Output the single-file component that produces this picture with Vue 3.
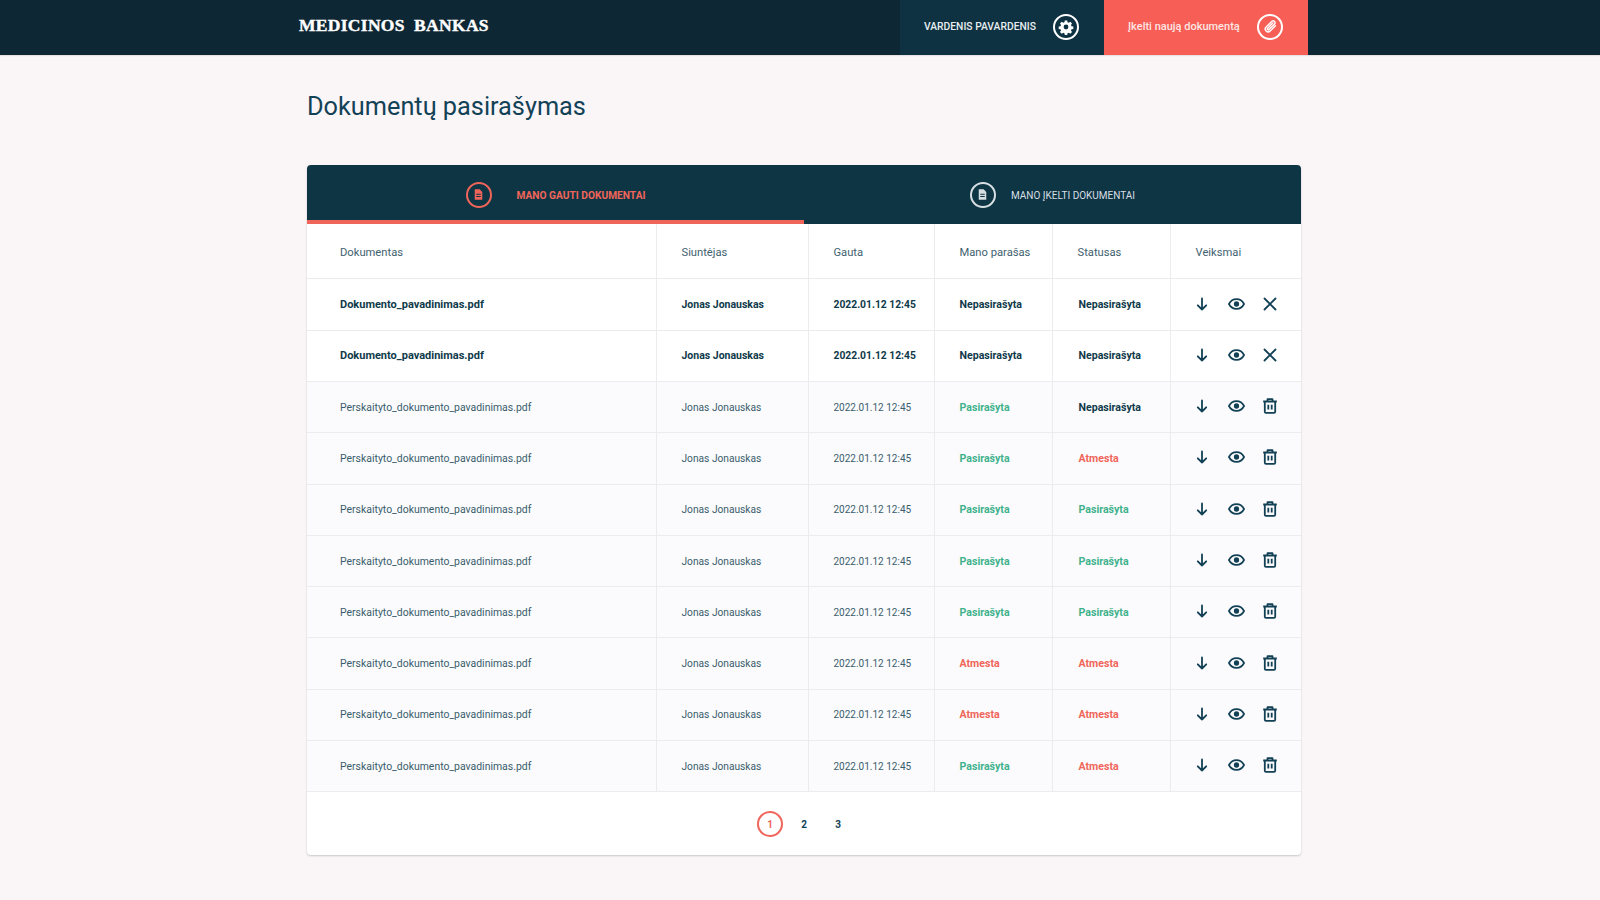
<template>
  <div class="page">
    <header class="topbar">
      <div class="topbarInner">
        <div class="logo">MEDICINOS&nbsp; BANKAS</div>
        <div class="userBox">
          <span class="userName">VARDENIS PAVARDENIS</span>
          <span class="circleIcon">
            <svg viewBox="0 0 24 24" width="16" height="16">
              <path fill="#fff" fill-rule="evenodd" d="M10 1h4l.6 3 2 .9 2.600-1.700 2.800 2.800-1.700 2.600.9 2 3 .6v4l-3 .6-.9 2 1.700 2.600-2.800 2.800-2.600-1.700-2 .9-.6 3h-4l-.6-3-2-.9-2.600 1.700-2.800-2.800 1.700-2.600-.9-2-3-.6v-4l3-.6.9-2-1.700-2.600 2.800-2.800 2.600 1.700 2-.9zM12 8a4 4 0 1 0 0 8 4 4 0 0 0 0-8z" transform="translate(1.200 1.200) scale(.9)" />
            </svg>
          </span>
        </div>
        <div class="uploadBox">
          <span class="uploadText">Įkelti naują dokumentą</span>
          <span class="circleIcon">
            <svg viewBox="0 0 24 24" width="17" height="17" fill="none" stroke="#fff" stroke-width="2" stroke-linecap="round">
              <path d="M19 11l-7.500 7.500a4 4 0 0 1-5.700-5.700l8.200-8.200a2.700 2.700 0 0 1 3.800 3.800l-8 8a1.300 1.300 0 0 1-1.900-1.900l7.400-7.400" />
            </svg>
          </span>
        </div>
      </div>
    </header>

    <main class="content">
      <h1 class="title">Dokumentų pasirašymas</h1>

      <section class="card">
        <div class="tabs">
          <div class="tab active">
            <span class="tabIcon">
              <svg viewBox="0 0 12 14" width="9" height="11">
                <path fill="currentColor" fill-rule="evenodd" d="M1 0h6.500L11 3.500V14H1zM3 6v1.200h6V6zm0 3v1.200h6V9z" />
              </svg>
            </span>
            <span class="tabLabel">MANO GAUTI DOKUMENTAI</span>
          </div>
          <div class="tab">
            <span class="tabIcon">
              <svg viewBox="0 0 12 14" width="9" height="11">
                <path fill="currentColor" fill-rule="evenodd" d="M1 0h6.500L11 3.500V14H1zM3 6v1.200h6V6zm0 3v1.200h6V9z" />
              </svg>
            </span>
            <span class="tabLabel">MANO ĮKELTI DOKUMENTAI</span>
          </div>
        </div>

        <div class="row head">
          <div class="cell first">Dokumentas</div>
          <div class="cell">Siuntėjas</div>
          <div class="cell">Gauta</div>
          <div class="cell">Mano parašas</div>
          <div class="cell">Statusas</div>
          <div class="cell">Veiksmai</div>
        </div>

        <div v-for="(d, i) in docs" :key="i" class="row item" :class="{ unread: d.unread }">
          <div class="cell first">{{ d.name }}</div>
          <div class="cell">Jonas Jonauskas</div>
          <div class="cell date">2022.01.12 12:45</div>
          <div class="cell status" :class="statusClass(d.sign)">{{ d.sign }}</div>
          <div class="cell status" :class="statusClass(d.status)">{{ d.status }}</div>
          <div class="cell actions">
            <svg viewBox="0 0 16 16" width="16" height="16" fill="none" stroke="currentColor" stroke-width="1.800" stroke-linecap="round" stroke-linejoin="round">
              <path d="M8 2.500v11M3.800 9.300 8 13.500l4.200-4.200" />
            </svg>
            <svg viewBox="0 0 18 14" width="17" height="14" fill="none" stroke="currentColor" stroke-width="1.800">
              <path d="M1 7c1.800-3.500 4.600-5.200 8-5.200s6.200 1.700 8 5.200c-1.800 3.500-4.600 5.200-8 5.200S2.800 10.500 1 7z" />
              <circle cx="9" cy="7" r="2.800" fill="currentColor" stroke="none" />
            </svg>
            <svg v-if="d.unread" viewBox="0 0 16 16" width="16" height="16" fill="none" stroke="currentColor" stroke-width="1.800" stroke-linecap="round">
              <path d="M2.500 2.500l11 11M13.500 2.500l-11 11" />
            </svg>
            <svg v-else viewBox="0 0 16 16" width="16" height="16" fill="none" stroke="currentColor" stroke-width="1.800" stroke-linejoin="round">
              <path d="M1.200 3.500h13.600M5.500 3.300V1.200h5v2.100M2.800 3.500v10.200c0 .7.500 1.200 1.200 1.200h8c.7 0 1.200-.5 1.200-1.200V3.500M6.300 6.800v4.800M9.700 6.800v4.800" />
            </svg>
          </div>
        </div>

        <div class="pager">
          <span class="pageNum current">1</span>
          <span class="pageNum">2</span>
          <span class="pageNum">3</span>
        </div>
      </section>
    </main>
  </div>
</template>

<script setup>
const unreadName = "Dokumento_pavadinimas.pdf"
const readName = "Perskaityto_dokumento_pavadinimas.pdf"

const docs = [
  { name: unreadName, sign: "Nepasirašyta", status: "Nepasirašyta", unread: true },
  { name: unreadName, sign: "Nepasirašyta", status: "Nepasirašyta", unread: true },
  { name: readName, sign: "Pasirašyta", status: "Nepasirašyta" },
  { name: readName, sign: "Pasirašyta", status: "Atmesta" },
  { name: readName, sign: "Pasirašyta", status: "Pasirašyta" },
  { name: readName, sign: "Pasirašyta", status: "Pasirašyta" },
  { name: readName, sign: "Pasirašyta", status: "Pasirašyta" },
  { name: readName, sign: "Atmesta", status: "Atmesta" },
  { name: readName, sign: "Atmesta", status: "Atmesta" },
  { name: readName, sign: "Pasirašyta", status: "Atmesta" },
]

const statusClass = (s) => {
  if (s === "Pasirašyta") return "ok"
  if (s === "Atmesta") return "bad"
  return "none"
}
</script>

<style>
html,
body {
  margin: 0;
  background: #faf6f8;
}
</style>

<style scoped>
.page {
  height: 900px;
  overflow: hidden;
  background: #faf6f8;
  font-family: "Roboto", "Noto Sans", sans-serif;
  color: #0f3a4a;
}

/* top bar */
.topbar {
  height: 55px;
  background: #0e2734;
  box-shadow: 0 1px 1px rgba(0, 0, 0, 0.08);
}
.topbarInner {
  width: 1010px;
  margin-left: 299px;
  height: 100%;
  display: flex;
  align-items: stretch;
}
.logo {
  width: 601px;
  padding-top: 14px;
  font-family: "Liberation Serif", serif;
  font-weight: 700;
  font-size: 17.500px;
  line-height: 22px;
  color: #fff;
  letter-spacing: 0.3px;
  -webkit-text-stroke: 0.4px #fff;
  white-space: nowrap;
}
.userBox {
  width: 204px;
  background: #0e3242;
  display: flex;
  align-items: center;
  padding: 0 0 2px 24px;
  box-sizing: border-box;
}
.userName {
  width: 129px;
  font-size: 10.300px;
  font-weight: 500;
  color: #e8edf0;
  white-space: nowrap;
}
.uploadBox {
  width: 204px;
  background: #f65e56;
  display: flex;
  align-items: center;
  padding: 0 0 2px 24px;
  box-sizing: border-box;
}
.uploadText {
  width: 129px;
  font-size: 11px;
  font-weight: 500;
  color: #fde6e3;
  white-space: nowrap;
}
.circleIcon {
  width: 26px;
  height: 26px;
  box-sizing: border-box;
  border: 2px solid #fff;
  border-radius: 50%;
  display: flex;
  align-items: center;
  justify-content: center;
}

/* content */
.content {
  width: 994px;
  margin-left: 307px;
}
.title {
  margin: 0;
  padding-top: 34px;
  height: 76px;
  box-sizing: border-box;
  font-size: 25.300px;
  line-height: 36px;
  font-weight: 400;
  color: #134257;
}
.card {
  margin-top: 34px;
  background: #fff;
  border-radius: 4px;
  box-shadow: 0 1px 2px rgba(0, 0, 0, 0.2);
}

/* tabs */
.tabs {
  display: flex;
  height: 59px;
  background: #0e3544;
  border-radius: 4px 4px 0 0;
}
.tab {
  width: 50%;
  box-sizing: border-box;
  display: flex;
  align-items: center;
  justify-content: center;
  gap: 15px;
  color: #d8dfe3;
}
.tab.active {
  gap: 25px;
  color: #f0655a;
  border-bottom: 4px solid #f0655a;
}
.tabIcon {
  width: 26px;
  height: 26px;
  box-sizing: border-box;
  border: 2px solid currentColor;
  border-radius: 50%;
  display: flex;
  align-items: center;
  justify-content: center;
}
.tab.active .tabIcon {
  margin-top: 4px;
}
.tabLabel {
  font-size: 10px;
  white-space: nowrap;
  padding-top: 1px;
}
.tab.active .tabLabel {
  font-size: 10.200px;
  font-weight: 700;
  margin-top: 4px;
}

/* table */
.row {
  display: grid;
  grid-template-columns: 350px 152px 126px 118px 118px 130px;
  height: 51.300px;
  box-sizing: border-box;
  border-bottom: 1px solid #ececef;
  font-size: 10.200px;
  background: #fbfbfd;
}
.row.head {
  height: 55.400px;
  background: #fff;
  font-size: 11.200px;
  color: #3f6270;
}
.row.head .cell {
  padding-top: 3px;
}
.row.head .first {
  font-size: 11.200px;
}
.row.item {
  color: #3a5d6c;
}
.row.unread {
  background: #fff;
  color: #0f3a4a;
  font-weight: 700;
  font-size: 10.500px;
}
.cell {
  display: flex;
  align-items: center;
  padding-left: 24.500px;
  border-right: 1px solid #ececef;
  white-space: nowrap;
}
.cell.first {
  padding-left: 33px;
  font-size: 10.450px;
}
.row.unread .cell.first {
  font-size: 11px;
}
.cell.date {
  font-size: 10px;
}
.row.unread .cell.date {
  font-size: 10.300px;
}
.cell:last-child {
  border-right: none;
}
.status {
  font-size: 10.600px;
  font-weight: 700;
}
.cell.status:nth-child(5) {
  padding-left: 25.500px;
}
.status.ok {
  color: #3fb28c;
}
.status.bad {
  color: #f0655a;
}
.status.none {
  color: #0f3a4a;
}
.actions {
  gap: 17.500px;
  padding-left: 23px;
  padding-bottom: 2px;
  color: #124055;
}

/* pager */
.pager {
  height: 63px;
  display: flex;
  align-items: center;
  justify-content: center;
  gap: 8px;
}
.pageNum {
  width: 26px;
  height: 26px;
  box-sizing: border-box;
  display: flex;
  align-items: center;
  justify-content: center;
  font-size: 10px;
  font-weight: 700;
  color: #124055;
  padding-top: 1px;
}
.pageNum.current {
  color: #f0655a;
  border: 2px solid #f0655a;
  border-radius: 50%;
}
</style>
